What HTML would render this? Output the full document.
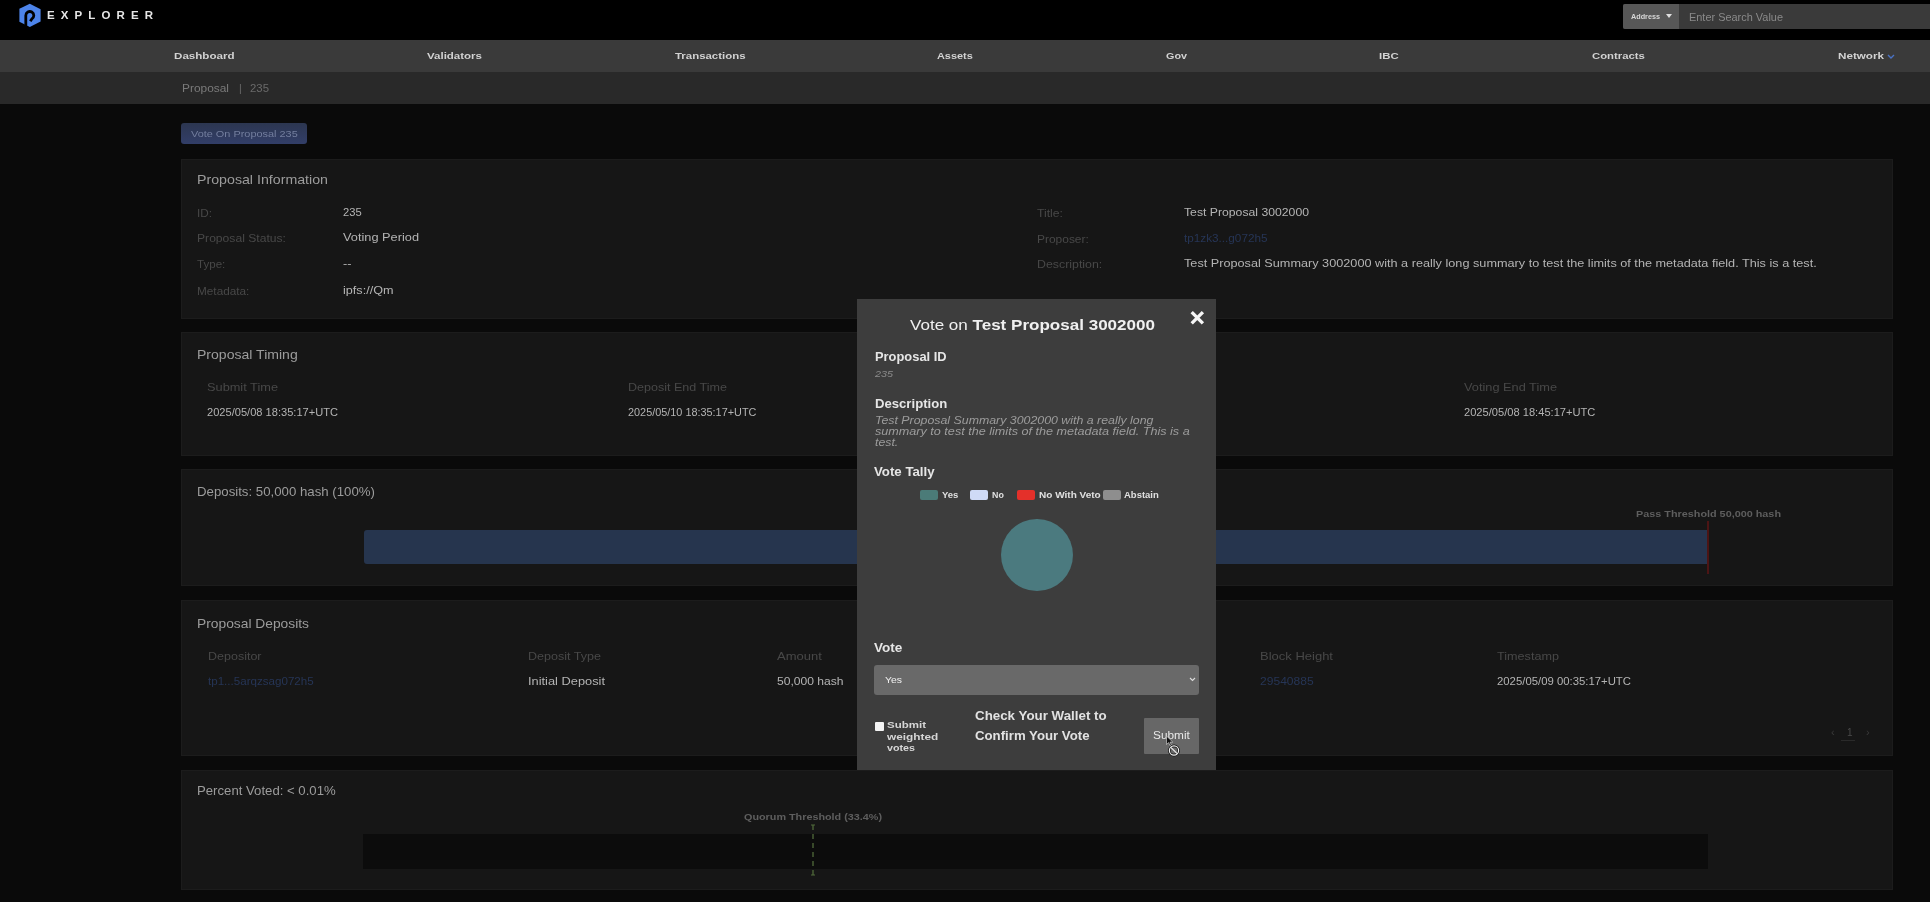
<!DOCTYPE html>
<html><head><meta charset="utf-8"><title>Explorer - Proposal 235</title>
<style>
*{margin:0;padding:0;box-sizing:border-box}
html,body{width:1930px;height:902px;overflow:hidden;background:#0a0a0a;font-family:"Liberation Sans",sans-serif}
.a{position:absolute}
.card{position:absolute;left:180.5px;width:1712.5px;background:#161616;border:1px solid #1c1c1c}
.t{position:absolute;line-height:1;white-space:nowrap;transform-origin:0 0}
</style></head><body>
<div id="root" style="position:absolute;left:0;top:0;width:1930px;height:902px;filter:blur(0.45px)">
<div class="a" style="left:0;top:0;width:1930px;height:40px;background:#000"></div>
<!-- logo -->
<svg class="a" style="left:18.5px;top:3px" width="23" height="25" viewBox="0 0 23 25">
  <polygon points="10.8,0.8 21.6,6.2 21.6,18.4 10.8,24 0.4,18.8 0.4,5.8" fill="#4d84ea"/>
  <path d="M6.8 25 V12.5 A4 4 0 1 1 12.8 16 L11.3 18.2" fill="none" stroke="#000" stroke-width="2.8"/>
</svg>
<!-- search -->
<div class="a" style="left:1623px;top:4px;width:307px;height:25px;background:#3a3a3a;border-radius:2px 0 0 2px"></div>
<div class="a" style="left:1623px;top:4px;width:56px;height:25px;background:#575757;border-radius:2px 0 0 2px"></div>
<div class="a" style="left:1666px;top:14px;width:0;height:0;border-left:3.5px solid transparent;border-right:3.5px solid transparent;border-top:4px solid #e0e0e0"></div>
<!-- nav -->
<div class="a" style="left:0;top:40px;width:1930px;height:32px;background:#3a3a3a"></div>
<svg class="a" style="left:1887px;top:54px" width="8" height="5" viewBox="0 0 8 5"><path d="M1 1 L4 4 L7 1" fill="none" stroke="#4a72c4" stroke-width="1.4"/></svg>
<!-- breadcrumb -->
<div class="a" style="left:0;top:72px;width:1930px;height:32px;background:#292929"></div>
<!-- vote button -->
<div class="a" style="left:181px;top:123px;width:126px;height:21px;background:linear-gradient(#2c3650,#323e68);border-radius:3px"></div>
<!-- cards -->
<div class="card" style="top:158.5px;height:160.5px"></div>
<div class="card" style="top:331.5px;height:124px"></div>
<div class="card" style="top:469px;height:117px"></div>
<div class="a" style="left:364px;top:530px;width:1344px;height:34px;background:#26354e;border-radius:3px 0 0 3px"></div>
<div class="a" style="left:1707px;top:521px;width:2px;height:53px;background:#4c1414"></div>
<div class="card" style="top:600px;height:155.5px"></div>
<div class="a" style="left:1841px;top:740px;width:14px;height:1px;background:#2a2a2a"></div>
<div class="card" style="top:769.5px;height:120.5px"></div>
<div class="a" style="left:363px;top:834px;width:1345px;height:35px;background:#0c0c0c"></div>
<svg class="a" style="left:808px;top:823px" width="10" height="54" viewBox="0 0 10 54"><path d="M5 2 V52" stroke="#506a3a" stroke-width="1.3" stroke-dasharray="5 4"/><path d="M3 2 H7 M3 52 H7" stroke="#506a3a" stroke-width="1.2"/></svg>
<!-- modal -->
<div class="a" style="left:857px;top:299px;width:359px;height:471px;background:#3d3d3d"></div>
<svg class="a" style="left:1189px;top:310px" width="17" height="17" viewBox="0 0 17 17"><path d="M2.7 2.2 L13.9 13.4 M13.9 2.2 L2.7 13.4" stroke="#f6f6f6" stroke-width="3.3" stroke-linecap="butt"/></svg>
<div class="a" style="left:920px;top:490px;width:18px;height:10px;background:#4b7b78;border-radius:2px"></div>
<div class="a" style="left:970px;top:490px;width:18px;height:10px;background:#cfdaf6;border-radius:2px"></div>
<div class="a" style="left:1017px;top:490px;width:18px;height:10px;background:#e4302a;border-radius:2px"></div>
<div class="a" style="left:1103px;top:490px;width:18px;height:10px;background:#8e8e8e;border-radius:2px"></div>
<div class="a" style="left:1001px;top:518.5px;width:71.5px;height:72px;background:#4b7a7f;border-radius:50%"></div>
<div class="a" style="left:874px;top:665px;width:325px;height:30px;background:#696969;border-radius:3px"></div>
<svg class="a" style="left:1189px;top:677px" width="7" height="5" viewBox="0 0 7 5"><path d="M1 1 L3.5 3.5 L6 1" fill="none" stroke="#ddd" stroke-width="1.1"/></svg>
<div class="a" style="left:874.5px;top:722px;width:9px;height:9px;background:#f4f4f4;border-radius:1px"></div>
<div class="a" style="left:1143.5px;top:718px;width:55.5px;height:36px;background:#676767;border-radius:1px"></div>
<div class="t" id="t0" style="letter-spacing:6.105px;left:47.00px;top:9.77px;font-size:11.5px;font-weight:700;color:#e6e6e6;">EXPLORER</div>
<div class="t" id="t1" style="transform:scaleX(0.9058);left:1631.00px;top:12.73px;font-size:8px;font-weight:700;color:#d8d8d8;">Address</div>
<div class="t" id="t2" style="transform:scaleX(1.0412);left:1689.00px;top:11.81px;font-size:10.5px;font-weight:400;color:#8a8a8a;">Enter Search Value</div>
<div class="t" id="t3" style="transform:scaleX(1.1746);left:174.00px;top:51.22px;font-size:9.9px;font-weight:700;color:#d2d2d2;">Dashboard</div>
<div class="t" id="t4" style="transform:scaleX(1.1652);left:427.30px;top:51.22px;font-size:9.9px;font-weight:700;color:#d2d2d2;">Validators</div>
<div class="t" id="t5" style="transform:scaleX(1.1572);left:674.50px;top:51.22px;font-size:9.9px;font-weight:700;color:#d2d2d2;">Transactions</div>
<div class="t" id="t6" style="transform:scaleX(1.1022);left:937.30px;top:51.22px;font-size:9.9px;font-weight:700;color:#d2d2d2;">Assets</div>
<div class="t" id="t7" style="transform:scaleX(1.0927);left:1165.80px;top:51.22px;font-size:9.9px;font-weight:700;color:#d2d2d2;">Gov</div>
<div class="t" id="t8" style="transform:scaleX(1.1519);left:1379.30px;top:51.22px;font-size:9.9px;font-weight:700;color:#d2d2d2;">IBC</div>
<div class="t" id="t9" style="transform:scaleX(1.1455);left:1592.00px;top:51.22px;font-size:9.9px;font-weight:700;color:#d2d2d2;">Contracts</div>
<div class="t" id="t10" style="transform:scaleX(1.1804);left:1837.60px;top:51.22px;font-size:9.9px;font-weight:700;color:#d2d2d2;">Network</div>
<div class="t" id="t11" style="transform:scaleX(1.1338);left:181.80px;top:83.11px;font-size:10.5px;font-weight:400;color:#7a7a7a;">Proposal</div>
<div class="t" id="t12" style="left:239.00px;top:83.11px;font-size:10.5px;font-weight:400;color:#6a6a6a;">|</div>
<div class="t" id="t13" style="transform:scaleX(1.0838);left:250.00px;top:83.11px;font-size:10.5px;font-weight:400;color:#6a6a6a;">235</div>
<div class="t" id="t14" style="transform:scaleX(1.1131);left:191.00px;top:128.90px;font-size:9.8px;font-weight:400;color:#737e9e;">Vote On Proposal 235</div>
<div class="t" id="t15" style="transform:scaleX(1.1648);left:196.60px;top:174.47px;font-size:12.2px;font-weight:400;color:#9c9c9c;">Proposal Information</div>
<div class="t" id="t16" style="transform:scaleX(1.1073);left:197.00px;top:208.03px;font-size:10.6px;font-weight:400;color:#484848;">ID:</div>
<div class="t" id="t17" style="transform:scaleX(1.1449);left:197.00px;top:233.03px;font-size:10.6px;font-weight:400;color:#484848;">Proposal Status:</div>
<div class="t" id="t18" style="transform:scaleX(1.0917);left:197.00px;top:259.03px;font-size:10.6px;font-weight:400;color:#484848;">Type:</div>
<div class="t" id="t19" style="transform:scaleX(1.1119);left:197.00px;top:285.53px;font-size:10.6px;font-weight:400;color:#484848;">Metadata:</div>
<div class="t" id="t20" style="transform:scaleX(1.0880);left:342.50px;top:208.28px;font-size:10.3px;font-weight:400;color:#b4b4b4;">235</div>
<div class="t" id="t21" style="transform:scaleX(1.2405);left:342.50px;top:233.28px;font-size:10.3px;font-weight:400;color:#b4b4b4;">Voting Period</div>
<div class="t" id="t22" style="transform:scaleX(1.2392);left:342.50px;top:259.28px;font-size:10.3px;font-weight:400;color:#b4b4b4;">--</div>
<div class="t" id="t23" style="transform:scaleX(1.2256);left:342.50px;top:285.78px;font-size:10.3px;font-weight:400;color:#b4b4b4;">ipfs://Qm</div>
<div class="t" id="t24" style="transform:scaleX(1.1516);left:1036.60px;top:207.83px;font-size:10.6px;font-weight:400;color:#484848;">Title:</div>
<div class="t" id="t25" style="transform:scaleX(1.1276);left:1036.60px;top:233.73px;font-size:10.6px;font-weight:400;color:#484848;">Proposer:</div>
<div class="t" id="t26" style="transform:scaleX(1.1674);left:1036.60px;top:259.03px;font-size:10.6px;font-weight:400;color:#484848;">Description:</div>
<div class="t" id="t27" style="transform:scaleX(1.1866);left:1183.70px;top:208.08px;font-size:10.3px;font-weight:400;color:#b4b4b4;">Test Proposal 3002000</div>
<div class="t" id="t28" style="transform:scaleX(1.1394);left:1183.70px;top:233.98px;font-size:10.3px;font-weight:400;color:#263556;">tp1zk3...g072h5</div>
<div class="t" id="t29" style="transform:scaleX(1.2315);left:1183.70px;top:259.28px;font-size:10.3px;font-weight:400;color:#b4b4b4;">Test Proposal Summary 3002000 with a really long summary to test the limits of the metadata field. This is a test.</div>
<div class="t" id="t30" style="transform:scaleX(1.1523);left:196.50px;top:349.37px;font-size:12.2px;font-weight:400;color:#9c9c9c;">Proposal Timing</div>
<div class="t" id="t31" style="transform:scaleX(1.2059);left:207.40px;top:381.93px;font-size:10.6px;font-weight:400;color:#484848;">Submit Time</div>
<div class="t" id="t32" style="transform:scaleX(1.0883);left:207.40px;top:407.77px;font-size:10.2px;font-weight:400;color:#b4b4b4;">2025/05/08 18:35:17+UTC</div>
<div class="t" id="t33" style="transform:scaleX(1.1839);left:628.20px;top:381.93px;font-size:10.6px;font-weight:400;color:#484848;">Deposit End Time</div>
<div class="t" id="t34" style="transform:scaleX(1.0667);left:628.20px;top:407.77px;font-size:10.2px;font-weight:400;color:#b4b4b4;">2025/05/10 18:35:17+UTC</div>
<div class="t" id="t35" style="transform:scaleX(1.2053);left:1463.60px;top:381.93px;font-size:10.6px;font-weight:400;color:#484848;">Voting End Time</div>
<div class="t" id="t36" style="transform:scaleX(1.0916);left:1463.60px;top:407.77px;font-size:10.2px;font-weight:400;color:#b4b4b4;">2025/05/08 18:45:17+UTC</div>
<div class="t" id="t37" style="transform:scaleX(1.0856);left:196.80px;top:486.47px;font-size:12.2px;font-weight:400;color:#9c9c9c;">Deposits: 50,000 hash (100%)</div>
<div class="t" id="t38" style="transform:scaleX(1.1049);left:1635.80px;top:508.50px;font-size:9.8px;font-weight:700;color:#5e5e5e;">Pass Threshold 50,000 hash</div>
<div class="t" id="t39" style="transform:scaleX(1.1324);left:196.60px;top:617.87px;font-size:12.2px;font-weight:400;color:#9c9c9c;">Proposal Deposits</div>
<div class="t" id="t40" style="transform:scaleX(1.1799);left:207.50px;top:651.03px;font-size:10.6px;font-weight:400;color:#484848;">Depositor</div>
<div class="t" id="t41" style="transform:scaleX(1.1377);left:207.50px;top:676.87px;font-size:10.2px;font-weight:400;color:#263556;">tp1...5arqzsag072h5</div>
<div class="t" id="t42" style="transform:scaleX(1.1843);left:528.00px;top:651.03px;font-size:10.6px;font-weight:400;color:#484848;">Deposit Type</div>
<div class="t" id="t43" style="transform:scaleX(1.2591);left:528.00px;top:676.87px;font-size:10.2px;font-weight:400;color:#b4b4b4;">Initial Deposit</div>
<div class="t" id="t44" style="transform:scaleX(1.2269);left:776.50px;top:651.03px;font-size:10.6px;font-weight:400;color:#484848;">Amount</div>
<div class="t" id="t45" style="transform:scaleX(1.1873);left:776.50px;top:676.87px;font-size:10.2px;font-weight:400;color:#b4b4b4;">50,000 hash</div>
<div class="t" id="t46" style="transform:scaleX(1.2272);left:1260.00px;top:651.03px;font-size:10.6px;font-weight:400;color:#484848;">Block Height</div>
<div class="t" id="t47" style="transform:scaleX(1.1847);left:1260.00px;top:676.87px;font-size:10.2px;font-weight:400;color:#263556;">29540885</div>
<div class="t" id="t48" style="transform:scaleX(1.1923);left:1497.00px;top:651.03px;font-size:10.6px;font-weight:400;color:#484848;">Timestamp</div>
<div class="t" id="t49" style="transform:scaleX(1.1132);left:1497.00px;top:676.87px;font-size:10.2px;font-weight:400;color:#b4b4b4;">2025/05/09 00:35:17+UTC</div>
<div class="t" id="t50" style="left:1831.00px;top:726.69px;font-size:11px;font-weight:400;color:#3a3a3a;">‹</div>
<div class="t" id="t51" style="left:1847.00px;top:727.53px;font-size:10px;font-weight:400;color:#4a4a4a;">1</div>
<div class="t" id="t52" style="left:1866.00px;top:726.69px;font-size:11px;font-weight:400;color:#3a3a3a;">›</div>
<div class="t" id="t53" style="transform:scaleX(1.0802);left:196.80px;top:785.27px;font-size:12.2px;font-weight:400;color:#9c9c9c;">Percent Voted: &lt; 0.01%</div>
<div class="t" id="t54" style="transform:scaleX(1.1022);left:744.00px;top:811.50px;font-size:9.8px;font-weight:700;color:#5e5e5e;">Quorum Threshold (33.4%)</div>
<div class="t" id="t55" style="transform:scaleX(1.1357);left:910.00px;top:317.30px;font-size:15px;font-weight:400;color:#f0f0f0;">Vote on <b>Test Proposal 3002000</b></div>
<div class="t" id="t56" style="transform:scaleX(1.0307);left:874.50px;top:351.42px;font-size:12.5px;font-weight:700;color:#e6e6e6;">Proposal ID</div>
<div class="t" id="t57" style="transform:scaleX(1.1003);left:874.50px;top:368.70px;font-size:9.8px;font-weight:400;color:#8c8c8c;font-style:italic">235</div>
<div class="t" id="t58" style="transform:scaleX(1.0499);left:874.50px;top:397.52px;font-size:12.5px;font-weight:700;color:#e6e6e6;">Description</div>
<div class="t" id="t59" style="transform:scaleX(1.1768);left:874.50px;top:414.61px;font-size:10.5px;font-weight:400;color:#9c9c9c;font-style:italic">Test Proposal Summary 3002000 with a really long</div>
<div class="t" id="t60" style="transform:scaleX(1.2010);left:874.50px;top:425.51px;font-size:10.5px;font-weight:400;color:#9c9c9c;font-style:italic">summary to test the limits of the metadata field. This is a</div>
<div class="t" id="t61" style="transform:scaleX(1.1691);left:874.50px;top:437.01px;font-size:10.5px;font-weight:400;color:#9c9c9c;font-style:italic">test.</div>
<div class="t" id="t62" style="transform:scaleX(1.0594);left:874.10px;top:466.12px;font-size:12.5px;font-weight:700;color:#e6e6e6;">Vote Tally</div>
<div class="t" id="t63" style="transform:scaleX(1.0809);left:941.60px;top:490.85px;font-size:8.8px;font-weight:700;color:#e0e0e0;">Yes</div>
<div class="t" id="t64" style="transform:scaleX(1.0056);left:991.50px;top:490.85px;font-size:8.8px;font-weight:700;color:#e0e0e0;">No</div>
<div class="t" id="t65" style="transform:scaleX(1.1390);left:1038.60px;top:490.85px;font-size:8.8px;font-weight:700;color:#e0e0e0;">No With Veto</div>
<div class="t" id="t66" style="transform:scaleX(1.0785);left:1124.40px;top:490.85px;font-size:8.8px;font-weight:700;color:#e0e0e0;">Abstain</div>
<div class="t" id="t67" style="transform:scaleX(1.0851);left:874.00px;top:641.82px;font-size:12.5px;font-weight:700;color:#e6e6e6;">Vote</div>
<div class="t" id="t68" style="transform:scaleX(1.0635);left:885.40px;top:675.40px;font-size:9.8px;font-weight:400;color:#f0f0f0;">Yes</div>
<div class="t" id="t69" style="transform:scaleX(1.1994);left:887.30px;top:720.47px;font-size:9.6px;font-weight:700;color:#d6d6d6;">Submit</div>
<div class="t" id="t70" style="transform:scaleX(1.2338);left:887.30px;top:731.87px;font-size:9.6px;font-weight:700;color:#d6d6d6;">weighted</div>
<div class="t" id="t71" style="transform:scaleX(1.1172);left:887.30px;top:742.87px;font-size:9.6px;font-weight:700;color:#d6d6d6;">votes</div>
<div class="t" id="t72" style="transform:scaleX(1.0672);left:975.00px;top:709.82px;font-size:12.5px;font-weight:700;color:#e2e2e2;">Check Your Wallet to</div>
<div class="t" id="t73" style="transform:scaleX(1.0568);left:975.00px;top:730.42px;font-size:12.5px;font-weight:700;color:#e2e2e2;">Confirm Your Vote</div>
<div class="t" id="t74" style="transform:scaleX(1.1823);left:1152.50px;top:730.53px;font-size:10px;font-weight:400;color:#e8e8e8;">Submit</div>
<!-- cursor -->
<svg class="a" style="left:1165px;top:731px" width="16" height="26" viewBox="0 0 16 26">
  <path d="M1.5 5 L1.5 13.5 L3.6 11.6 L5.1 14.6 L6.4 14 L5 11.1 L7.8 11.1 Z" fill="#111" stroke="#ddd" stroke-width="0.6"/>
  <circle cx="9" cy="19.5" r="4.6" fill="none" stroke="#111" stroke-width="2.6"/>
  <circle cx="9" cy="19.5" r="4.6" fill="none" stroke="#eee" stroke-width="1.2"/>
  <path d="M5.8 16.3 L12.2 22.7" stroke="#eee" stroke-width="1.2"/>
</svg>
</div>
</body></html>
